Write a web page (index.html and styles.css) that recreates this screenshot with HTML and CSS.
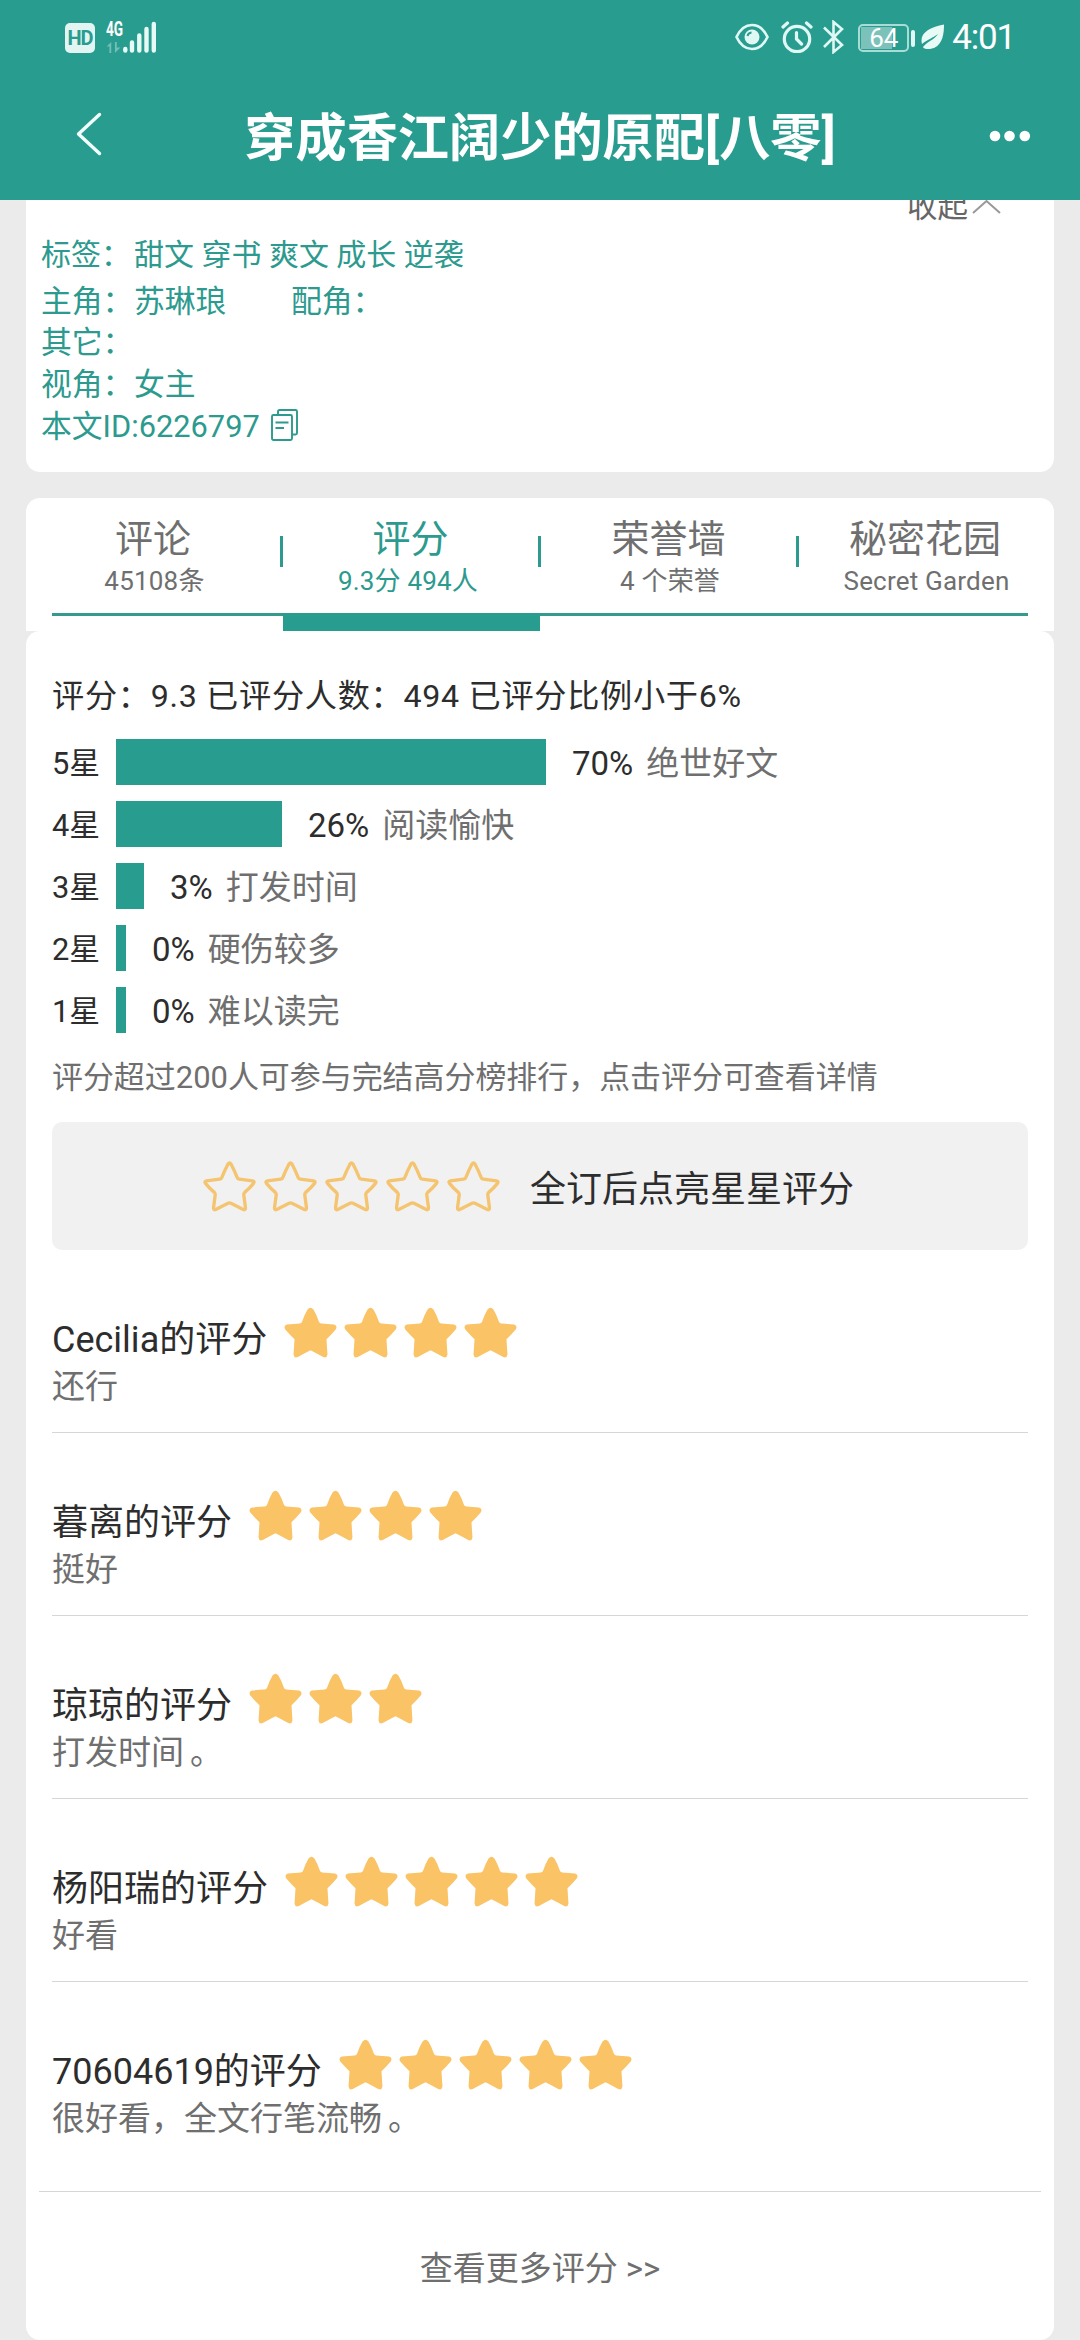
FILE: index.html
```html
<!DOCTYPE html>
<html lang="zh-CN">
<head>
<meta charset="utf-8">
<title>穿成香江阔少的原配[八零]</title>
<link rel="stylesheet" href="styles.css">
</head>
<body>
<svg class="defs" aria-hidden="true">
  <symbol id="star" viewBox="0 0 54 52">
    <path d="M24 2.600Q27 -1 30 2.600Q33 7.500 35.500 14.800Q36.300 16.700 38 16.900Q44 17.200 51 17.900Q55 19.300 52.700 23Q48 28.500 43.300 32.800Q43.800 41 44.300 48.500Q43.800 52.400 40 51Q33 47 27 44Q21 47 14 51Q10.200 52.400 9.700 48.500Q10.200 41 10.700 32.800Q6 28.500 1.300 23Q-1 19.300 3 17.900Q10 17.200 16 16.900Q17.700 16.700 18.500 14.800Q21 7.500 24 2.600Z"/>
  </symbol>
  <symbol id="star-line" viewBox="0 0 54 52">
    <path d="M25.500 3Q27 .8 28.500 3Q32 9.500 34.800 16.800Q35.300 18.300 37 18.500L50.500 20.200Q53 20.800 51.500 22.800Q47.500 27.800 42.500 32Q41.300 33.200 41.600 35L43.300 47.800Q43.300 50.300 41 49.500L28.500 43Q27 42.300 25.500 43L13 49.500Q10.700 50.300 10.700 47.800L12.400 35Q12.700 33.200 11.500 32Q6.500 27.800 2.500 22.800Q1 20.800 3.500 20.200L17 18.500Q18.700 18.300 19.200 16.800Q22 9.500 25.500 3Z"/>
  </symbol>
</svg>
<header class="header">
  <div class="status">
    <div class="status-left">
      <span class="hd">HD</span>
      <span class="net"><b>4G</b>
        <svg width="16" height="12" viewBox="0 0 16 12"><path d="M0 5L5 0V12H3V5ZM9 0H11V6H15L9 12Z" fill="#fff" fill-opacity=".35"/></svg>
      </span>
      <svg class="signal" width="34" height="32" viewBox="0 0 34 32"><path d="M2.300 28V29.500M9 21.500V29.500M16.300 14.500V29.500M23.500 8V29.500M30.800 3V29.500" fill="none" stroke="#e8faf6" stroke-width="4.400" stroke-linecap="round"/></svg>
    </div>
    <div class="status-right">
      <svg width="34" height="28" viewBox="0 0 34 28"><path d="M1.500 14C9 -2 25 -2 32.500 14C25 30 9 30 1.500 14Z" fill="none" stroke="#e0f8f4" stroke-width="2.700"/><circle cx="17" cy="14" r="7.500" fill="#e0f8f4"/><path d="M12.500 13A4.500 4.500 0 0 1 16.500 9.500" fill="none" stroke="#299c90" stroke-width="2"/></svg>
      <svg class="alarm" width="32" height="32" viewBox="0 0 32 32"><g fill="none" stroke="#e0f8f4" stroke-width="3.200" stroke-linecap="round"><circle cx="16" cy="18" r="12.700"/><path d="M2 6L6.500 2M30 6L25.500 2M15.500 11.500V18L20.500 23"/></g></svg>
      <svg class="bt" width="22" height="34" viewBox="0 0 22 34"><path d="M2 7.500L20 25L11.500 32V2L20 9L2 27" fill="none" stroke="#e0f8f4" stroke-width="2.600"/></svg>
      <span class="battery"><i></i><b>64</b></span><span class="nub"></span>
      <svg class="leaf" width="24" height="26" viewBox="0 0 24 26"><path d="M23 .5C9 3 -2 9 1 20C7 15 12 14 17 10C13 16 7 17 2 23C3 26 10 25 13 24C22 20 23 9 23 .5Z" fill="#e8faf6"/></svg>
      <span class="time">4:01</span>
    </div>
  </div>
  <div class="nav">
    <svg class="back" width="26" height="44" viewBox="0 0 26 44"><path d="M23.500 2.500L2.500 22L23.500 41.500" fill="none" stroke="#f2fffc" stroke-width="3.400" stroke-linecap="round" stroke-linejoin="round"/></svg>
    <h1>穿成香江阔少的原配[八零]</h1>
    <svg class="dots" width="42" height="12" viewBox="0 0 42 12"><g fill="#fff"><circle cx="6" cy="6" r="5.300"/><circle cx="20.500" cy="6" r="5.300"/><circle cx="35.800" cy="6" r="5.300"/></g></svg>
  </div>
</header>
<main>
  <section class="card info">
    <div class="collapse">收起<svg width="29" height="14" viewBox="0 0 29 14"><path d="M1 13L14.500 1L28 13" fill="none" stroke="#999" stroke-width="2"/></svg></div>
    <div class="line tags"><span class="key">标签：</span><span>甜文 穿书 爽文 成长 逆袭</span></div>
    <div class="line roles"><span class="key">主角：</span><span class="lead">苏琳琅</span><span>配角：</span></div>
    <div class="line">其它：</div>
    <div class="line"><span class="key">视角：</span><span>女主</span></div>
    <div class="line">本文ID:6226797<svg class="copy" width="28" height="32" viewBox="0 0 28 32"><g fill="none" stroke="#2c9a8e" stroke-width="1.900"><rect x="1" y="6" width="20" height="25" rx="1.500"/><path d="M7 6V2.500Q7 1 8.500 1H24.500Q26 1 26 2.500V24Q26 25.500 24.500 25.500H21M4.500 13.500H17.500M4.500 19H13"/></g></svg></div>
  </section>
  <nav class="tabs">
    <div class="tab"><b>评论</b><span>45108条</span></div>
    <div class="tab active"><b>评分</b><span>9.3分 494人</span></div>
    <div class="tab"><b>荣誉墙</b><span>4 个荣誉</span></div>
    <div class="tab"><b>秘密花园</b><span>Secret Garden</span></div>
    <div class="rule"></div>
    <div class="indicator"></div>
  </nav>
  <section class="card scores">
    <p class="summary">评分：9.3 已评分人数：494 已评分比例小于6%</p>
    <div class="chart">
      <div class="row"><span class="label">5星</span><i style="width:430px"></i><span class="pct">70%</span><em>绝世好文</em></div>
      <div class="row"><span class="label">4星</span><i style="width:166px"></i><span class="pct">26%</span><em>阅读愉快</em></div>
      <div class="row"><span class="label">3星</span><i style="width:28px"></i><span class="pct">3%</span><em>打发时间</em></div>
      <div class="row"><span class="label">2星</span><i style="width:10px"></i><span class="pct">0%</span><em>硬伤较多</em></div>
      <div class="row"><span class="label">1星</span><i style="width:10px"></i><span class="pct">0%</span><em>难以读完</em></div>
    </div>
    <p class="note">评分超过200人可参与完结高分榜排行，点击评分可查看详情</p>
    <div class="rate">
      <div class="stars outline"><svg><use href="#star-line"/></svg><svg><use href="#star-line"/></svg><svg><use href="#star-line"/></svg><svg><use href="#star-line"/></svg><svg><use href="#star-line"/></svg></div>
      <span>全订后点亮星星评分</span>
    </div>
    <article class="review">
      <div class="who"><span>Cecilia的评分</span><div class="stars"><svg><use href="#star"/></svg><svg><use href="#star"/></svg><svg><use href="#star"/></svg><svg><use href="#star"/></svg></div></div>
      <p>还行</p>
    </article>
    <article class="review">
      <div class="who"><span>暮离的评分</span><div class="stars"><svg><use href="#star"/></svg><svg><use href="#star"/></svg><svg><use href="#star"/></svg><svg><use href="#star"/></svg></div></div>
      <p>挺好</p>
    </article>
    <article class="review">
      <div class="who"><span>琼琼的评分</span><div class="stars"><svg><use href="#star"/></svg><svg><use href="#star"/></svg><svg><use href="#star"/></svg></div></div>
      <p>打发时间<span class="stop">。</span></p>
    </article>
    <article class="review">
      <div class="who"><span>杨阳瑞的评分</span><div class="stars"><svg><use href="#star"/></svg><svg><use href="#star"/></svg><svg><use href="#star"/></svg><svg><use href="#star"/></svg><svg><use href="#star"/></svg></div></div>
      <p>好看</p>
    </article>
    <article class="review last">
      <div class="who"><span>70604619的评分</span><div class="stars"><svg><use href="#star"/></svg><svg><use href="#star"/></svg><svg><use href="#star"/></svg><svg><use href="#star"/></svg><svg><use href="#star"/></svg></div></div>
      <p>很好看，全文行笔流畅<span class="stop">。</span></p>
    </article>
    <div class="more">查看更多评分 &gt;&gt;</div>
  </section>
</main>
</body>
</html>
```
FILE: styles.css
```css
* { box-sizing: border-box; margin: 0; padding: 0; }
html, body { width: 1080px; height: 2340px; overflow: hidden; }
body {
  background: #ebebeb;
  font-family: Roboto, "Noto Sans CJK SC", sans-serif;
  color: #2d2d2d;
  white-space: nowrap;
}
svg { display: block; flex: none; }
i, em { font-style: normal; }
.defs { position: absolute; width: 0; height: 0; }

.header { position: relative; z-index: 1; height: 200px; background: #299c90; color: #fff; }
.status { display: flex; justify-content: space-between; height: 74px; padding: 0 65px 0 65px; }
.status-left, .status-right { display: flex; align-items: center; height: 74px; }
.hd { width: 30px; height: 30px; margin-top: 2px; border-radius: 5px; background: #e2f5f2; color: #299c90; font-size: 20px; font-weight: 700; line-height: 31px; text-align: center; letter-spacing: -1px; }
.net { display: flex; flex-direction: column; width: 17px; margin-left: 11px; gap: 4px; }
.net b { font-size: 20px; line-height: 17px; transform: scaleX(.68); transform-origin: left; }
.net svg { height: 11px; }
.alarm { margin-left: 12px; }
.bt { margin-left: 9px; }
.battery { position: relative; width: 51px; height: 28px; margin: 1px 0 0 14px; border: 2px solid #a9dcd5; border-radius: 5px; text-align: center; }
.battery i { position: absolute; left: 1px; top: 1px; width: 31px; height: 22px; background: #7dc2ba; }
.battery b { position: relative; display: block; font-size: 26px; font-weight: 400; line-height: 25px; }
.nub { width: 4px; height: 17px; margin: 2px 0 0 2px; border-radius: 2px; background: #e0f8f4; }
.leaf { margin-left: 6px; }
.time { margin-left: 7px; font-size: 35px; line-height: 74px; letter-spacing: -1.2px; padding-top: 2px; }
.nav { display: grid; grid-template-columns: 200px 1fr 200px; align-items: center; height: 126px; padding-bottom: 2px; }
.back { margin: -5px 0 0 76px; }
.nav h1 { margin-top: 6px; font-size: 51.200px; font-weight: 700; line-height: 70px; text-align: center; }
.dots { margin-left: 109px; }

main { padding: 0 26px; }
.card { background: #fff; }
.info { height: 272px; padding: 0 15px; border-radius: 0 0 14px 14px; color: #2c9a8e; font-size: 30.800px; }
.collapse { display: flex; justify-content: flex-end; align-items: center; height: 34px; margin-top: -10px; padding-right: 38px; color: #666; font-size: 30.500px; gap: 4px; line-height: 34px; transform: translateY(0); }
.info { display: flow-root; }
.line { display: flex; align-items: center; height: 42px; line-height: 42px; }
.tags { height: 62px; line-height: 62px; font-size: 30px; }
.roles { height: 32px; margin-bottom: 4px; }
.key { width: 93px; }
.lead { width: 157px; }
.copy { margin: -4px 0 0 11px; }

.tabs { position: relative; display: grid; grid-template-columns: 257px 258px 258px 255px; height: 133px; margin-top: 26px; background: #fff; border-radius: 14px 14px 0 0; color: #6f6f6f; }
.tab { display: flex; flex-direction: column; align-items: center; position: relative; padding-top: 16px; }
.tab b { padding-right: 3px; font-size: 38px; font-weight: 400; line-height: 50px; }
.tab span { font-size: 26px; line-height: 34px; letter-spacing: .2px; }
.tab:not(:nth-child(4))::after { content: ""; position: absolute; right: 0; top: 38px; width: 3px; height: 31px; background: #2c9a8e; }
.tab.active { color: #2c9a8e; }
.tab.active span { padding-right: 8px; }
.rule { position: absolute; left: 26px; right: 26px; top: 115px; height: 3px; background: #35998d; }
.indicator { position: absolute; left: 257px; top: 115px; width: 257px; height: 18px; background: #299c90; }

.scores { height: 1709px; border-radius: 14px; padding: 40px 26px 0; }
.summary { height: 50px; line-height: 50px; font-size: 32.200px; letter-spacing: .7px; }
.chart { display: grid; gap: 16px; margin-top: 18px; }
.row { display: flex; align-items: center; height: 46px; }
.row .label { width: 64px; font-size: 30.800px; line-height: 46px; padding-top: 3px; }
.row i { height: 46px; background: #299c90; }
.row .pct { margin-left: 26px; font-size: 33px; line-height: 46px; padding-top: 3px; }
.row em { margin-left: 13px; font-size: 33px; line-height: 46px; padding-top: 3px; color: #6f6f6f; }
.note { height: 50px; margin-top: 18px; line-height: 53px; font-size: 30.950px; color: #6f6f6f; }
.rate { display: flex; align-items: center; height: 128px; margin-top: 21px; padding-left: 151px; border-radius: 10px; background: #f1f1f1; font-size: 36px; }
.rate > span { margin-left: 30px; }
.stars { display: flex; gap: 7px; }
.stars svg { width: 53px; height: 51px; fill: #f9c366; overflow: visible; }
.stars.outline { gap: 8px; }
.stars.outline svg { fill: none; stroke: #f5c470; stroke-width: 3.400; }
.review { height: 183px; padding-top: 57px; border-bottom: 1px solid #d6d6d6; }
.who { display: flex; height: 51px; font-size: 36px; line-height: 67px; }
.who .stars { margin-left: 17px; }
.review p { padding-top: 5px; height: 50px; line-height: 47px; font-size: 33px; color: #6f6f6f; }
.review .stop { margin-left: 6px; }
.review.last { height: 210px; margin: 0 -13px; padding: 57px 13px 0; }
.more { padding-top: 52px; text-align: center; font-size: 33px; line-height: 50px; color: #6f6f6f; }
```
